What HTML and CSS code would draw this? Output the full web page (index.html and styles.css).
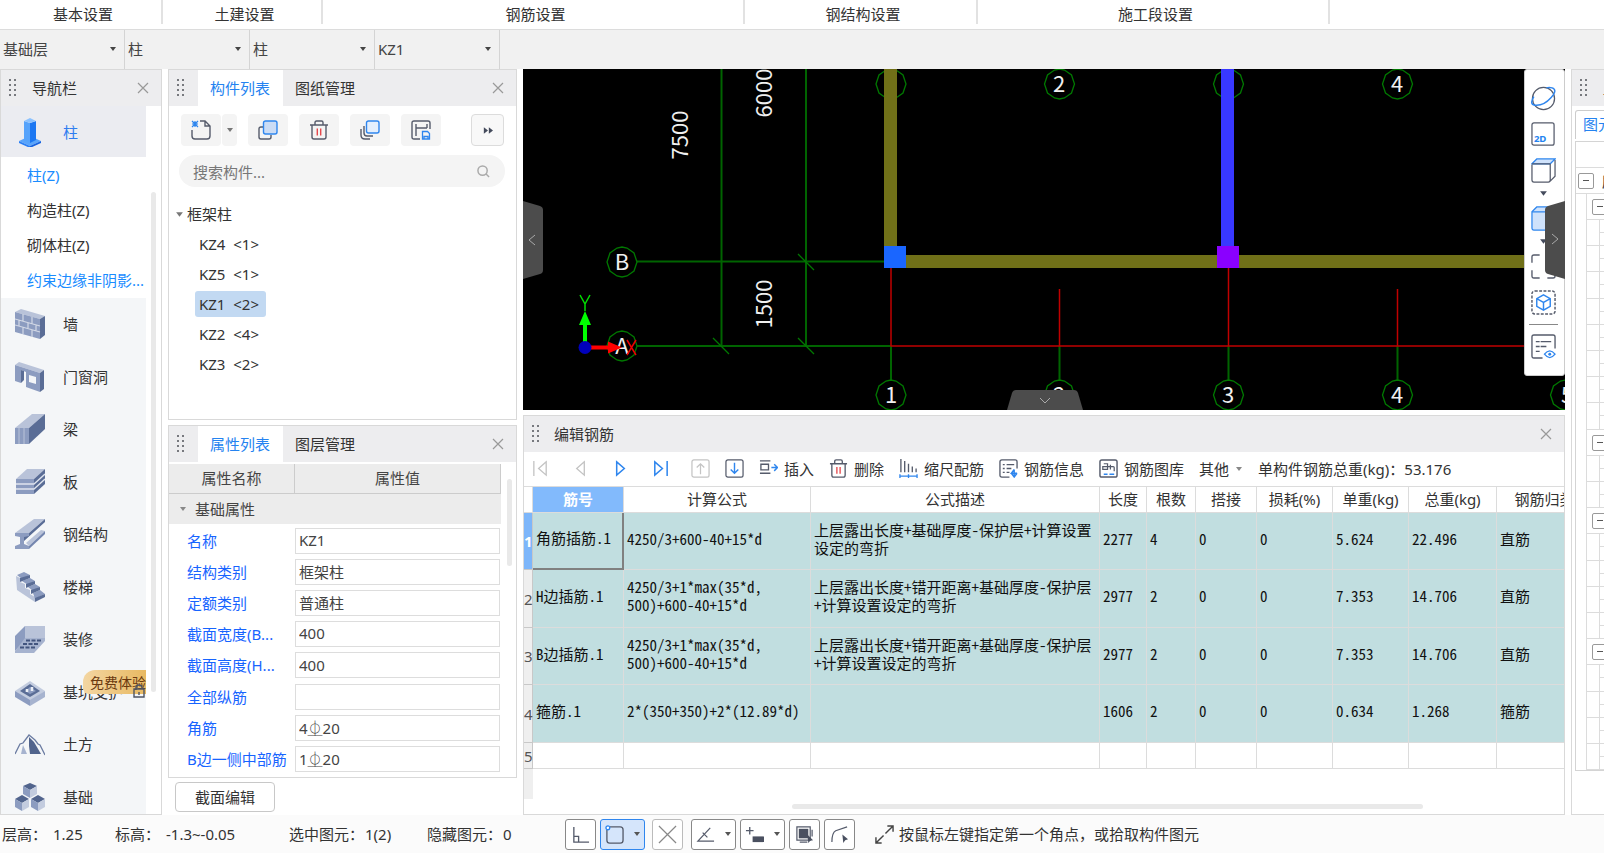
FILE: index.html
```html
<!DOCTYPE html>
<html lang="zh-CN">
<head>
<meta charset="utf-8">
<title>编辑钢筋</title>
<link rel="stylesheet" href="styles.css">
</head>
<body>
<svg class="defs" aria-hidden="true">
  <symbol id="grip" viewBox="0 0 8 18"><path d="M0 0h2v2H0zM5 0h2v2H5zM0 5h2v2H0zM5 5h2v2H5zM0 10h2v2H0zM5 10h2v2H5zM0 15h2v2H0zM5 15h2v2H5z" fill="#77797e"/></symbol>
  <symbol id="close" viewBox="0 0 12 12"><path d="M1 1l10 10M11 1L1 11" stroke="#999" stroke-width="1.2" fill="none"/></symbol>
  <symbol id="down" viewBox="0 0 8 6"><path d="M1 1h6L4 5z" fill="currentColor"/></symbol>
  <symbol id="trash" viewBox="0 0 20 20"><path d="M1 5h18M6 5V2.5Q6 1 7.500 1h5Q14 1 14 2.500V5M3 5v12q0 2 2 2h10q2 0 2-2V5" fill="none" stroke="#555b6b" stroke-width="1.4"/><path d="M8.300 8.500v7M11.700 8.500v7" stroke="#e5484d" stroke-width="1.4"/></symbol>
</svg>

<header class="ribbon">
  <div class="ribbon-group g1">基本设置</div>
  <div class="ribbon-group g2">土建设置</div>
  <div class="ribbon-group g3">钢筋设置</div>
  <div class="ribbon-group g4">钢结构设置</div>
  <div class="ribbon-group g5">施工段设置</div>
</header>

<div class="selectors">
  <label class="picker"><select aria-label="楼层"><option>基础层</option></select><svg><use href="#down"/></svg></label>
  <label class="picker"><select aria-label="构件大类"><option>柱</option></select><svg><use href="#down"/></svg></label>
  <label class="picker"><select aria-label="构件类型"><option>柱</option></select><svg><use href="#down"/></svg></label>
  <label class="picker"><select aria-label="构件"><option>KZ1</option></select><svg><use href="#down"/></svg></label>
</div>

<main class="workspace">
  <nav class="panel nav">
    <div class="panel-head">
      <svg class="grip"><use href="#grip"/></svg><span class="nav-title">导航栏</span>
      <button class="close" aria-label="关闭导航栏"><svg><use href="#close"/></svg></button>
    </div>
    <div class="nav-body">
      <div class="nav-list">
        <button class="nav-item current">
          <svg viewBox="0 0 30 30"><path d="M4 24l11-5 11 5-11 5z" fill="#5aa5fb"/><path d="M4 24l11 5v2L4 26z" fill="#2a7ff5"/><path d="M26 24l-11 5v2l11-5z" fill="#1763e0"/><path d="M9 4l6 2v20l-6-3z" fill="#56a3fb"/><path d="M15 6l6-2v19l-6 3z" fill="#1c77f2"/><path d="M9 4l6-3 6 3-6 2z" fill="#8cc2ff"/></svg>
          <span>柱</span></button>
        <div class="nav-sub">
          <a href="#z" class="hot">柱(Z)</a>
          <a href="#gz">构造柱(Z)</a>
          <a href="#qt">砌体柱(Z)</a>
          <a href="#ys" class="hot">约束边缘非阴影...</a>
        </div>
        <div class="nav-rest">
          <button class="nav-item"><svg viewBox="0 0 30 30"><path d="M0 3l6-3 24 7-5 3z" fill="#b9c3d9"/><path d="M25 10l5-3v19l-5 4z" fill="#5a6d96"/><path d="M0 3l25 7v20L0 23z" fill="#8c9cc0"/><path d="M0 10l25 7M0 16l25 7M8 5v7M17 8v7M4 11v6M13 14v6M21 16v6M8 18v7M17 21v7" stroke="#d3d9e6" stroke-width="1.2"/></svg><span>墙</span></button>
          <button class="nav-item"><svg viewBox="0 0 30 30"><path d="M0 3l4-3 25 8-4 3z" fill="#b9c3d9"/><path d="M25 11l4-3v19l-4 3z" fill="#5a6d96"/><path fill-rule="evenodd" d="M0 3l25 8v19L11 25V10L6 8v13l-6-2zM14 13v7l7 2v-7z" fill="#8c9cc0"/><path d="M6 8l3 1v9l-3 3z" fill="#5a6d96"/></svg><span>门窗洞</span></button>
          <button class="nav-item"><svg viewBox="0 0 30 30"><path d="M0 14L17 0h13L14 14z" fill="#b9c3d9"/><path d="M14 14L30 0v15L14 30z" fill="#5a6d96"/><path d="M0 14h14v16H0z" fill="#8c9cc0"/><path d="M4 14v16M9 14v16" stroke="#b9c3d9"/></svg><span>梁</span></button>
          <button class="nav-item"><svg viewBox="0 0 30 30"><path d="M1 12L12 2h18L19 12z" fill="#b9c3d9"/><path d="M19 12L30 2v15L19 27z" fill="#5a6d96"/><path d="M1 12h18v15H1z" fill="#8c9cc0"/><path d="M1 17h18L30 7M1 22h18l11-10" stroke="#dfe4ee" stroke-width="1.3" fill="none"/></svg><span>板</span></button>
          <button class="nav-item"><svg viewBox="0 0 30 30"><path d="M0 14L19 0h11L14 14z" fill="#b9c3d9"/><path d="M14 14L30 0v3L9 22v-6z" fill="#5a6d96"/><path d="M11 24l15-13 4 1-16 15z" fill="#b9c3d9"/><path d="M14 27l16-15v3L14 30z" fill="#7486af"/><path d="M0 14h14v3l-5 1v7l5 2v3H0v-3l5-2v-7l-5-1z" fill="#8c9cc0"/></svg><span>钢结构</span></button>
          <button class="nav-item"><svg viewBox="0 0 30 30"><path d="M1 4l4 2v4l5 2v4l5 2v4l5 3v5L2 18z" fill="#b9c3d9"/><path d="M2 3l7-3 6 3-8 4zM7 9l8-3 5 3-7 4zM13 15l7-3 5 3-7 4zM18 21l7-3 5 4-10 5z" fill="#8c9cc0"/><path d="M5 6l10-3v3L5 10zM11 12l9-3v3l-9 4zM16 18l9-3v3l-9 4zM20 26l10-4v3l-10 5z" fill="#5a6d96"/></svg><span>楼梯</span></button>
          <button class="nav-item"><svg viewBox="0 0 30 30"><path d="M10 2h20v15H10z" fill="#b9c3d9"/><path d="M10 2v15L0 27V12z" fill="#8c9cc0"/><path d="M10 14h20v3L19 29H0v-2z" fill="#a6b3cf"/><path d="M11 16.500h16M8 20h16M5 23.500h16" stroke="#42557f" stroke-width="1.800" stroke-dasharray="4 1.500"/></svg><span>装修</span></button>
          <button class="nav-item"><svg viewBox="0 0 30 30"><path d="M0 14L15 4l15 10-15 11z" fill="#c3ccdf"/><path d="M0 14l15 9v6L0 20z" fill="#8c9cc0"/><path d="M30 14l-15 9v6l15-9z" fill="#a6b3cf"/><path d="M5 14l10-7 10 7-10 6z" fill="#5a6d96"/><path d="M10 14l5-4 6 4-6 3z" fill="#8c9cc0"/><path d="M12 12v3M17 10v4" stroke="#e9edf5" stroke-width="2.500"/></svg><span>基坑支护</span><em class="badge">免费体验</em><svg class="lock" viewBox="0 0 12 14"><path d="M3 5V3.500Q3 1 6 1t3 2.500V5M1 5h10v8H1zM6 8v3" fill="none" stroke="#4e5464" stroke-width="1.4"/></svg></button>
          <button class="nav-item"><svg viewBox="0 0 30 30"><path d="M0 25L5 15l3-1 6-8 6 5 3 4 2 1 5 10" fill="none" stroke="#6b7ca2" stroke-width="1.300"/><path d="M14 8l5 5 7 12H15l-1-8z" fill="#51648d"/><path d="M8 16l4 9H6z" fill="#a6b3cf"/></svg><span>土方</span></button>
          <button class="nav-item"><svg viewBox="0 0 30 30"><path d="M8 4l7-3 7 3-7 4z" fill="#51648d"/><path d="M8 4l7 4v8l-7-4z" fill="#8c9cc0"/><path d="M22 4l-7 4v8l7-4z" fill="#c3ccdf"/><path d="M0 17l7-4 7 4-7 4z" fill="#51648d"/><path d="M0 17l7 4v8l-7-4z" fill="#8c9cc0"/><path d="M14 17l-7 4v8l7-4z" fill="#c3ccdf"/><path d="M16 17l7-4 7 4-7 4z" fill="#51648d"/><path d="M16 17l7 4v8l-7-4z" fill="#8c9cc0"/><path d="M30 17l-7 4v8l7-4z" fill="#c3ccdf"/></svg><span>基础</span></button>
        </div>
      </div>
      <div class="scroll nav-scroll"></div>
    </div>
  </nav>

  <div class="side">
    <section class="panel components">
      <div class="panel-head">
        <svg class="grip"><use href="#grip"/></svg>
        <button class="tab active">构件列表</button><button class="tab">图纸管理</button>
        <button class="close" aria-label="关闭构件列表"><svg><use href="#close"/></svg></button>
      </div>
      <div class="tools">
        <div class="split">
          <button class="tool" aria-label="新建"><svg viewBox="0 0 20 20"><path d="M1 10v6q0 3 3 3h12q3 0 3-3V6l-5-5H9M14 1v5h5" fill="none" stroke="#555b6b" stroke-width="1.4"/><path d="M1 1l6 6M7 1L1 7M4 1v6M1 4h6" stroke="#2f86ee" stroke-width="1.2"/></svg></button>
          <button class="tool more" aria-label="新建选项"><svg><use href="#down"/></svg></button>
        </div>
        <button class="tool" aria-label="复制"><svg viewBox="0 0 20 20"><path d="M5 7H3Q1 7 1 9v8q0 2 2 2h8q2 0 2-2v-2" fill="none" stroke="#555b6b" stroke-width="1.4"/><rect x="5.500" y="1" width="13.500" height="13" rx="2" fill="#cbdcf5" stroke="#2f86ee" stroke-width="1.4"/></svg></button>
        <button class="tool" aria-label="删除"><svg><use href="#trash"/></svg></button>
        <button class="tool" aria-label="层间复制"><svg viewBox="0 0 20 20"><path d="M1 9v6q0 4 4 4h5M4 6v7q0 3 3 3h6" fill="none" stroke="#555b6b" stroke-width="1.4"/><rect x="6.500" y="1" width="12.500" height="12" rx="2" fill="#e4effd" stroke="#2f86ee" stroke-width="1.4"/></svg></button>
        <button class="tool" aria-label="存档"><svg viewBox="0 0 20 20"><path d="M9 19H3q-2 0-2-2V3q0-2 2-2h14q2 0 2 2v6M5 4v12M5 8h11M16 4v4" fill="none" stroke="#555b6b" stroke-width="1.4"/><path d="M11.500 11.500h5l2 2V19h-7zM13 19v-2.500h4V19" fill="none" stroke="#2f86ee" stroke-width="1.3"/></svg></button>
        <button class="tool expand" aria-label="更多"><svg viewBox="0 0 12 10"><path d="M1 1l5 4-5 4zM7 1l5 4-5 4z" fill="#444b5c"/></svg></button>
      </div>
      <label class="search"><input type="text" placeholder="搜索构件..." aria-label="搜索构件"><svg viewBox="0 0 14 14"><circle cx="6" cy="6" r="5" fill="none" stroke="#aaa" stroke-width="1.600"/><path d="M9.500 9.500L13 13" stroke="#aaa" stroke-width="1.600"/></svg></label>
      <div class="tree">
        <div class="tree-root"><svg><use href="#down"/></svg>框架柱</div>
        <ul>
          <li><span>KZ4 &nbsp;&lt;1&gt;</span></li>
          <li><span>KZ5 &nbsp;&lt;1&gt;</span></li>
          <li><span class="picked">KZ1 &nbsp;&lt;2&gt;</span></li>
          <li><span>KZ2 &nbsp;&lt;4&gt;</span></li>
          <li><span>KZ3 &nbsp;&lt;2&gt;</span></li>
        </ul>
      </div>
    </section>

    <section class="panel props">
      <div class="panel-head">
        <svg class="grip"><use href="#grip"/></svg>
        <button class="tab active">属性列表</button><button class="tab">图层管理</button>
        <button class="close" aria-label="关闭属性列表"><svg><use href="#close"/></svg></button>
      </div>
      <div class="props-body">
        <div class="props-list">
          <div class="props-cols"><div>属性名称</div><div>属性值</div></div>
          <div class="props-group"><svg><use href="#down"/></svg>基础属性</div>
          <div class="fields">
            <label for="f1">名称</label><input id="f1" value="KZ1">
            <label for="f2">结构类别</label><input id="f2" value="框架柱">
            <label for="f3">定额类别</label><input id="f3" value="普通柱">
            <label for="f4">截面宽度(B...</label><input id="f4" value="400">
            <label for="f5">截面高度(H...</label><input id="f5" value="400">
            <label for="f6">全部纵筋</label><input id="f6" value="">
            <label for="f7">角筋</label><input id="f7" value="4⏂20">
            <label for="f8">B边一侧中部筋</label><input id="f8" value="1⏂20">
          </div>
        </div>
        <div class="scroll props-scroll"></div>
      </div>
    </section>
    <button class="section-edit">截面编辑</button>
  </div>

  <div class="center">
    <div class="viewport">
      <svg class="drawing" role="img" aria-label="轴网平面图">
        <g fill="none" stroke="#007800" stroke-width="1.300">
          <path stroke="#006400" stroke-width="2" d="M198.500 0v277M283 0v277M114 192.500h248M114 277h254M368 277v34M536.500 277v34M705.500 277v34M874.500 277v34"/>
          <path d="M275 185l16 16M275 269l16 16M190 269l16 16"/>
          <path id="oct" d="M114 193l-3 9-7 5-5 1-5-1-7-5-3-9 3-9 7-5 5-1 5 1 7 5z"/>
          <use href="#oct" y="84"/><use href="#oct" x="269" y="-178"/><use href="#oct" x="437.500" y="-178"/><use href="#oct" x="606.500" y="-178"/><use href="#oct" x="775.500" y="-178"/>
          <use href="#oct" x="269" y="133"/><use href="#oct" x="437.500" y="133"/><use href="#oct" x="606.500" y="133"/><use href="#oct" x="775.500" y="133"/><use href="#oct" x="943.500" y="133"/>
        </g>
        <path d="M368 199v78h760M536.500 220v57M705.500 199v78M874.500 220v57" fill="none" stroke="#c00000" stroke-width="1.500"/>
        <path d="M361 0h13v186h740v13H361z" fill="#707018"/>
        <path d="M698 0h13v180h-13z" fill="#3838ff"/>
        <path d="M361 177h22v22h-22z" fill="#1a66ff"/><path d="M694 177h22v22h-22z" fill="#8a00ff"/>
        <g class="axis-text">
          <text x="99" y="201">B</text><text x="99" y="285">A</text>
          <text x="536" y="23">2</text><text x="874" y="23">4</text>
          <text x="368" y="334">1</text><text x="536" y="334">2</text><text x="705" y="334">3</text><text x="874" y="334">4</text><text x="1044" y="334">5</text>
          <text transform="translate(165 66) rotate(-90)">7500</text>
          <text transform="translate(249 24) rotate(-90)">6000</text>
          <text transform="translate(249 235) rotate(-90)">1500</text>
        </g>
        <path d="M60 277v-21h-4l6-14 6 14h-4v21z" fill="#0f0"/><path d="M57 226l5 9 5-9M62 235v7" stroke="#0d0" stroke-width="1.500" fill="none"/>
        <path d="M66 276.500h19v-4l14 6-14 6v-4H66z" fill="#f00"/><path d="M104 271l9 15M113 271l-9 15" stroke="#e00" stroke-width="1.500"/>
        <circle cx="62" cy="278.500" r="6.500" fill="#00b"/>
      </svg>
      <div class="view-tools">
        <button aria-label="动态观察"><svg viewBox="0 0 26 26"><circle cx="13" cy="13" r="11.500" fill="none" stroke="#555b6b" stroke-width="1.300"/><path d="M3 11Q-2 19 4 20 13 21 21 12 28 4 22 2q-3-1-6 0" fill="none" stroke="#2f86ee" stroke-width="1.500"/></svg></button>
        <button aria-label="二维"><svg viewBox="0 0 26 26"><rect x="1" y="1" width="23" height="23" rx="2" fill="#fff" stroke="#555b6b" stroke-width="1.300"/><text x="3" y="21">2D</text></svg></button>
        <button aria-label="俯视"><svg viewBox="0 0 26 26"><path d="M1 6l5-5h19l-5 5z" fill="#cfe2fb" stroke="#2f86ee" stroke-width="1.300"/><path d="M1 7v16q0 2 2 2h15q2 0 2-2V6M25 2v17l-5 5M1 6h19" fill="none" stroke="#555b6b" stroke-width="1.300"/></svg></button>
        <svg class="tri"><use href="#down"/></svg>
        <button aria-label="着色"><svg viewBox="0 0 26 26"><path d="M1 6l5-5h19v18l-5 6H3q-2 0-2-2z" fill="#cfe2fb" stroke="#2f86ee" stroke-width="1.300"/><path d="M1 6h19v18" fill="none" stroke="#2f86ee" stroke-width="1.300"/></svg></button>
        <svg class="tri"><use href="#down"/></svg>
        <button aria-label="全屏"><svg viewBox="0 0 26 26"><path d="M9 1H3Q1 1 1 3v6M17 1h6q2 0 2 2v6M9 25H3q-2 0-2-2v-6M17 25h6q2 0 2-2v-6" fill="none" stroke="#555b6b" stroke-width="1.400"/></svg></button>
        <button aria-label="局部三维"><svg viewBox="0 0 26 26"><rect x="1" y="1" width="24" height="24" rx="3" fill="none" stroke="#555b6b" stroke-width="1.500" stroke-dasharray="3 1.500"/><path d="M13 5l7 4v8l-7 4-7-4V9zM6 9l7 4 7-4M13 13v8" fill="none" stroke="#2f86ee" stroke-width="1.500"/></svg></button>
        <hr>
        <button aria-label="显示设置"><svg viewBox="0 0 26 26"><path d="M12 25H3q-2 0-2-2V3q0-2 2-2h20q2 0 2 2v12M5 8h4M10 8h11M5 13h4M10 13h6M5 18h4" fill="none" stroke="#555b6b" stroke-width="1.400"/><path d="M14 21q5.500-7 11 0-5.500 7-11 0z" fill="#fff" stroke="#2f86ee" stroke-width="1.400"/><circle cx="19.500" cy="21" r="1.500" fill="#2f86ee"/></svg></button>
      </div>
      <button class="handle left" aria-label="收起左侧"><svg viewBox="0 0 20 78"><path d="M0 0l17 5q3 1 3 4v60q0 3-3 4L0 78z" fill="#4c4c4c"/><path d="M12 34l-6 5 6 5" fill="none" stroke="#aaa"/></svg></button>
      <button class="handle right" aria-label="收起右侧"><svg viewBox="0 0 20 78"><path d="M20 0L3 5Q0 6 0 9v60q0 3 3 4l17 5z" fill="#4c4c4c"/><path d="M7 33l6 5-6 5" fill="none" stroke="#aaa"/></svg></button>
      <button class="handle bottom" aria-label="收起底部"><svg viewBox="0 0 76 20"><path d="M0 20L5 3q1-3 4-3h58q3 0 4 3l5 17z" fill="#4c4c4c"/><path d="M33 8l5 5 5-5" fill="none" stroke="#aaa"/></svg></button>
    </div>

    <section class="panel rebar">
      <div class="panel-head">
        <svg class="grip"><use href="#grip"/></svg><span class="rebar-title">编辑钢筋</span>
        <button class="close" aria-label="关闭编辑钢筋"><svg><use href="#close"/></svg></button>
      </div>
      <div class="rebar-tools">
        <div class="steps">
          <button aria-label="首行" disabled><svg viewBox="0 0 20 20"><path d="M3 2v16M16 3L8 10l8 7z" fill="none" stroke="#c4c4c4" stroke-width="1.400"/></svg></button>
          <button aria-label="上一行" disabled><svg viewBox="0 0 20 20"><path d="M14 3l-8 7 8 7z" fill="none" stroke="#c4c4c4" stroke-width="1.400"/></svg></button>
          <button aria-label="下一行"><svg viewBox="0 0 20 20"><path d="M6 3l8 7-8 7z" fill="none" stroke="#2f86ee" stroke-width="1.600"/></svg></button>
          <button aria-label="末行"><svg viewBox="0 0 20 20"><path d="M4 3l8 7-8 7zM17 2v16" fill="none" stroke="#2f86ee" stroke-width="1.600"/></svg></button>
          <button aria-label="上移" disabled><svg viewBox="0 0 20 20"><rect x="1" y="1" width="18" height="18" rx="2" fill="none" stroke="#c4c4c4" stroke-width="1.300"/><path d="M10 16V5M6 9l4-4 4 4" fill="none" stroke="#c4c4c4" stroke-width="1.300"/></svg></button>
        </div>
        <button aria-label="下移"><svg viewBox="0 0 20 20"><rect x="1" y="1" width="18" height="18" rx="2" fill="none" stroke="#555b6b" stroke-width="1.300"/><path d="M10 4v11M6 11l4 4 4-4" fill="none" stroke="#2f86ee" stroke-width="1.500"/></svg></button>
        <button><svg viewBox="0 0 20 20"><path d="M1 2h11M1 15h11M2 5.500h8v6H2z" fill="none" stroke="#555b6b" stroke-width="1.400"/><path d="M13 9h6M16 5.500L19.500 9 16 12.500" fill="none" stroke="#2f86ee" stroke-width="1.500"/></svg>插入</button>
        <button><svg><use href="#trash"/></svg>删除</button>
        <button><svg viewBox="0 0 20 20"><path d="M2 0v14M6 2v12M10 5v9M14 8v6M18 10v4" fill="none" stroke="#555b6b" stroke-width="1.400"/><path d="M1 18h18M1 16v4M10 16v4M19 16v4" fill="none" stroke="#2f86ee" stroke-width="1.400"/></svg>缩尺配筋</button>
        <button><svg viewBox="0 0 20 20"><path d="M11 19H3q-2 0-2-2V3q0-2 2-2h14q2 0 2 2v7M4 6h2M8 6h8M4 10h2M8 10h5M4 14h2M8 14h3" fill="none" stroke="#555b6b" stroke-width="1.400"/><path d="M16 11v8M16 11l-3 4h6M13 15l3 4 3-4" fill="none" stroke="#2f86ee" stroke-width="1.500"/></svg>钢筋信息</button>
        <button><svg viewBox="0 0 20 20"><rect x="1" y="1" width="18" height="18" rx="2" fill="none" stroke="#555b6b" stroke-width="1.500"/><path d="M5 5h4v6H4V8h5M12 11V6M9 8h6q1 0 1 1v4" fill="none" stroke="#555b6b" stroke-width="1.300"/><path d="M5 16h4M11 16h5" stroke="#2f86ee" stroke-width="1.500"/></svg>钢筋图库</button>
        <button class="other">其他<svg class="tri"><use href="#down"/></svg></button>
        <div class="total">单构件钢筋总重(kg)：<span>53.176</span></div>
      </div>
      <div class="grid-wrap">
        <table>
          <colgroup><col class="c0"><col class="c1"><col class="c2"><col class="c3"><col class="c4"><col class="c5"><col class="c6"><col class="c7"><col class="c8"><col class="c9"><col class="c10"></colgroup>
          <thead><tr><td></td><th class="on">筋号</th><th>计算公式</th><th>公式描述</th><th>长度</th><th>根数</th><th>搭接</th><th>损耗(%)</th><th>单重(kg)</th><th>总重(kg)</th><th>钢筋归类</th></tr></thead>
          <tbody>
            <tr class="row"><th class="on">1</th><td class="focus">角筋插筋.1</td><td>4250/3+600-40+15*d</td><td>上层露出长度+基础厚度-保护层+计算设置<br>设定的弯折</td><td>2277</td><td>4</td><td>0</td><td>0</td><td>5.624</td><td>22.496</td><td>直筋</td></tr>
            <tr class="row"><th>2</th><td>H边插筋.1</td><td>4250/3+1*max(35*d,<br>500)+600-40+15*d</td><td>上层露出长度+错开距离+基础厚度-保护层<br>+计算设置设定的弯折</td><td>2977</td><td>2</td><td>0</td><td>0</td><td>7.353</td><td>14.706</td><td>直筋</td></tr>
            <tr class="row"><th>3</th><td>B边插筋.1</td><td>4250/3+1*max(35*d,<br>500)+600-40+15*d</td><td>上层露出长度+错开距离+基础厚度-保护层<br>+计算设置设定的弯折</td><td>2977</td><td>2</td><td>0</td><td>0</td><td>7.353</td><td>14.706</td><td>直筋</td></tr>
            <tr class="row"><th>4</th><td>箍筋.1</td><td>2*(350+350)+2*(12.89*d)</td><td></td><td>1606</td><td>2</td><td>0</td><td>0</td><td>0.634</td><td>1.268</td><td>箍筋</td></tr>
            <tr class="blank"><th>5</th><td></td><td></td><td></td><td></td><td></td><td></td><td></td><td></td><td></td><td></td></tr>
          </tbody>
        </table>
        <div class="gutter"></div>
      </div>
      <div class="scroll grid-scroll"></div>
    </section>
  </div>

  <aside class="panel shown">
    <div class="panel-head"><svg class="grip"><use href="#grip"/></svg><span class="shown-title">显示设置</span></div>
    <div class="shown-tabs"><button>图元显示</button></div>
    <div class="shown-grid">
      <div class="shown-head"></div>
      <div class="shown-rows">
        <div class="r top"><button class="fold" aria-label="折叠所有构件"></button><span>所有构件</span></div>
        <div class="r mid"><button class="fold" aria-label="折叠"></button></div>
        <div class="r leaf"></div><div class="r leaf"></div><div class="r leaf"></div><div class="r leaf"></div><div class="r leaf"></div><div class="r leaf"></div><div class="r leaf"></div><div class="r leaf"></div>
        <div class="r mid"><button class="fold" aria-label="折叠"></button></div>
        <div class="r leaf"></div><div class="r leaf"></div>
        <div class="r mid"><button class="fold" aria-label="折叠"></button></div>
        <div class="r leaf"></div><div class="r leaf"></div><div class="r leaf"></div><div class="r leaf"></div>
        <div class="r mid"><button class="fold" aria-label="折叠"></button></div>
        <div class="r leaf"></div><div class="r leaf"></div><div class="r leaf"></div><div class="r leaf"></div>
      </div>
    </div>
  </aside>
</main>

<footer class="status">
  <div class="s1">层高：<span>1.25</span></div>
  <div class="s2">标高：<span>-1.3~-0.05</span></div>
  <div class="s3">选中图元：<span>1(2)</span></div>
  <div class="s4">隐藏图元：<span>0</span></div>
  <div class="modes">
    <button aria-label="正交"><svg viewBox="0 0 20 20"><path d="M3 2v16h16M3 12h5v6" fill="none" stroke="#555b6b" stroke-width="1.400"/></svg></button>
    <button class="wide on" aria-label="捕捉"><svg viewBox="0 0 20 20"><path d="M5 2h11q3 0 3 3v11q0 3-3 3H5q-3 0-3-3V5" fill="none" stroke="#555b6b" stroke-width="1.400"/><circle cx="3" cy="3" r="2" fill="#fff" stroke="#2f86ee" stroke-width="1.400"/></svg><svg class="tri"><use href="#down"/></svg></button>
    <button class="faint" aria-label="交点"><svg viewBox="0 0 20 20"><path d="M1 1l18 18M19 1L1 19" stroke="#888" stroke-width="1.300"/></svg></button>
    <button class="wide" aria-label="角度"><svg viewBox="0 0 20 20"><path d="M15 3L2 17h17M7 8l5 5" fill="none" stroke="#555b6b" stroke-width="1.300"/></svg><svg class="tri"><use href="#down"/></svg></button>
    <button class="wide" aria-label="偏移"><svg viewBox="0 0 20 20"><path d="M1 6h8M5 2v8" stroke="#555b6b" stroke-width="1.400"/><path d="M8 12h12v6H8z" fill="#4a5060"/></svg><svg class="tri"><use href="#down"/></svg></button>
    <button aria-label="选择"><svg viewBox="0 0 20 20"><path d="M2 2h14v14H2zM5 18h8M18 5v7" fill="none" stroke="#555b6b" stroke-width="1.300"/><path d="M4 4h10v10H4z" fill="#4a5060"/><path d="M13 10l6 6-3 .5-2 2.500z" fill="#4a5060"/></svg></button>
    <button aria-label="折线"><svg viewBox="0 0 20 20"><path d="M2 18Q2 8 6 6l12-4" fill="none" stroke="#555b6b" stroke-width="1.300"/><path d="M13 10l6 5-3 1-2 3z" fill="#4a5060"/></svg></button>
  </div>
  <div class="hint"><svg viewBox="0 0 20 20"><path d="M11 9l8-8M13 1h6v6M9 11l-8 8M1 13v6h6" fill="none" stroke="#444" stroke-width="1.500"/></svg>按鼠标左键指定第一个角点，或拾取构件图元</div>
</footer>
</body>
</html>
```
FILE: styles.css
```css
* { box-sizing: border-box; }
body {
  margin: 0;
  height: 100vh;
  display: flex;
  flex-direction: column;
  overflow: hidden;
  background: #fff;
  color: #333;
  font: 15px/20px "Noto Sans", "Noto Sans CJK SC", sans-serif;
}
button, input, select { font: inherit; color: inherit; margin: 0; }
button { background: none; border: 0; padding: 0; display: flex; align-items: center; justify-content: center; white-space: nowrap; }
svg { display: block; flex: none; }
.defs { position: absolute; width: 0; height: 0; }

/* Ribbon captions and pickers */
.ribbon { display: flex; flex: none; height: 29px; }
.ribbon-group { height: 24px; padding: 4px 0 0 5px; text-align: center; border-right: 2px solid #e2e2e2; }
.g1 { width: 163px; }
.g2 { width: 160px; }
.g3 { width: 422px; }
.g4 { width: 233px; }
.g5 { width: 352px; }
.selectors { display: flex; flex: none; height: 40px; background: #f1f1f1; border-top: 1px solid #dcdcdc; }
.picker { display: flex; align-items: center; width: 125px; padding: 0 7px 2px 3px; border-right: 1px solid #d4d4d4; color: #444; }
.picker select { flex: 1; min-width: 0; appearance: none; border: 0; padding: 0; background: none; }
.picker svg { width: 8px; height: 6px; }

/* Panels */
.workspace { flex: 1; min-height: 0; display: grid; grid-template-columns: 162px 349px minmax(0, 1fr) 33px; column-gap: 6px; }
.panel { border: 1px solid #d9d9d9; background: #fff; min-width: 0; }
.panel-head { display: flex; align-items: center; flex: none; height: 36px; background: #ededef; }
.grip { width: 8px; height: 18px; margin-left: 8px; }
.close { margin-left: auto; margin-right: 12px; }
.close svg { width: 12px; height: 12px; }
.scroll { border-radius: 3px; background: #e9e9e9; }

/* Navigation */
.nav { display: flex; flex-direction: column; overflow: hidden; }
.nav-title { margin-left: 15px; }
.nav-body { flex: 1; min-height: 0; display: flex; gap: 5px; }
.nav-list { width: 145px; overflow: hidden; background: #f4f6f8; }
.nav-item { position: relative; width: 100%; height: 100%; justify-content: flex-start; gap: 18px; padding-left: 14px; }
.nav-item > svg { width: 30px; height: 30px; }
.nav-item.current { height: 51px; background: #ebecf1; color: #2f7df0; }
.nav-sub { background: #fff; padding: 1px 0 0 26px; }
.nav-sub a { display: block; height: 35px; line-height: 35px; color: inherit; text-decoration: none; white-space: nowrap; }
.nav-sub a.hot { color: #1a8cff; }
.nav-rest { display: grid; grid-auto-rows: 52px 53px; }
.badge { position: absolute; right: 0; top: 5px; width: 63px; height: 24px; padding-left: 7px; border-radius: 12px 0 0 6px; background: linear-gradient(90deg, #f3d6a2, #e8b962); color: #6b3a10; font: 14px/24px "Noto Sans CJK SC", sans-serif; text-align: left; }
.nav-item > .lock { position: absolute; right: 1px; top: 19px; width: 12px; height: 14px; }
.nav-scroll { width: 5px; height: 500px; margin-top: 86px; }

/* Component list */
.side { display: flex; flex-direction: column; min-width: 0; }
.components { height: 351px; }
.tab { height: 36px; padding: 0 13px 0 12px; }
.tab.active { margin-left: 13px; background: #fff; color: #2583f0; }
.tools { display: flex; align-items: center; gap: 11px; padding: 8px 12px 0; }
.tool { width: 40px; height: 32px; border-radius: 4px; background: #f4f4f4; }
.tool svg { width: 20px; height: 20px; }
.split { display: flex; gap: 1px; }
.tool.more { width: 15px; color: #777; }
.tool.more svg { width: 8px; height: 6px; }
.tool.expand { width: 33px; margin-left: auto; border: 1px solid #dcdcdc; background: #f8f8f8; }
.tool.expand svg { width: 10px; height: 9px; }
.search { display: flex; align-items: center; height: 32px; margin: 9px 11px 0 10px; padding: 1px 15px 0 14px; border-radius: 16px; background: #f4f4f4; }
.search input { flex: 1; min-width: 0; border: 0; padding: 0; background: none; outline: 0; }
.search input::placeholder { color: #777; opacity: 1; }
.search svg { width: 13px; height: 13px; }
.tree { padding: 12px 0 0 6px; }
.tree-root { display: flex; align-items: center; height: 30px; gap: 3px; }
.tree-root svg { width: 9px; height: 7px; color: #777; }
.tree ul { list-style: none; margin: 0; padding: 0 0 0 20px; }
.tree li { display: flex; align-items: center; height: 30px; }
.tree li span { padding: 3px 7px 3px 4px; border-radius: 3px; }
.tree .picked { background: #c2d9f2; }

/* Properties */
.props { display: flex; flex-direction: column; height: 353px; margin-top: 5px; overflow: hidden; }
.props-body { display: flex; gap: 6px; padding-top: 2px; }
.props-list { width: 332px; color: #444; }
.props-cols { display: grid; grid-template-columns: 126px 1fr; height: 30px; background: #ececec; border-bottom: 1px solid #ccc; text-align: center; line-height: 29px; }
.props-cols div { border-right: 1px solid #ccc; }
.props-group { display: flex; align-items: center; gap: 8px; height: 30px; padding-left: 10px; background: #ececec; }
.props-group svg { width: 8px; height: 6px; color: #888; }
.fields { display: grid; grid-template-columns: 105px 205px; grid-auto-rows: 31px 31px 31px 31px 32px; column-gap: 3px; padding: 1px 0 0 18px; align-items: center; }
.fields label { color: #1764ff; white-space: nowrap; }
.fields input { height: 26px; border: 1px solid #ddd; padding: 0 3px 1px; background: #fff; min-width: 0; }
.props-scroll { width: 5px; height: 87px; margin-top: 15px; }
.section-edit { width: 100px; height: 30px; margin: 4px 0 0 7px; border: 1px solid #c8c8c8; border-radius: 4px; }

/* Drawing area */
.center { display: flex; flex-direction: column; gap: 5px; min-width: 0; }
.viewport { position: relative; flex: none; height: 341px; overflow: hidden; background: #000; }
.drawing { width: 100%; height: 100%; }
.axis-text { fill: #f0f0f0; font: 22px "Noto Sans CJK SC", sans-serif; text-anchor: middle; }
.view-tools { position: absolute; right: 0; top: 0; width: 41px; height: 307px; display: flex; flex-direction: column; align-items: center; padding: 16px 2px 0 0; gap: 11px; background: #fff; border: 1px solid #ccc; border-radius: 3px; }
.view-tools svg { width: 25px; height: 25px; }
.view-tools .tri { width: 9px; height: 7px; margin: -4px 0 -2px; color: #444b5c; }
.view-tools hr { width: 29px; margin: -2px 0; border: 0; border-top: 1px solid #888; }
.view-tools text { fill: #2583f0; font: bold 10px "Noto Sans", sans-serif; }
.handle { position: absolute; }
.handle.left { left: 0; top: 132px; }
.handle.right { right: 0; top: 132px; }
.handle.left svg, .handle.right svg { width: 20px; height: 78px; }
.handle.bottom { left: 484px; bottom: 0; }
.handle.bottom svg { width: 76px; height: 20px; }

/* Rebar editor */
.rebar { flex: 1; min-height: 0; display: flex; flex-direction: column; overflow: hidden; }
.rebar-title { margin-left: 14px; }
.rebar-tools { display: flex; align-items: center; flex: none; height: 34px; padding: 0 0 1px 7px; gap: 15px; }
.rebar-tools button { gap: 6px; }
.rebar-tools svg { width: 19px; height: 19px; }
.rebar-tools .steps { display: flex; gap: 21px; }
.rebar-tools .tri { width: 8px; height: 6px; color: #888; }
.total { white-space: nowrap; }
.grid-wrap { flex: none; height: 313px; overflow: hidden; }
table { width: 1069px; table-layout: fixed; border-collapse: separate; border-spacing: 0; }
.c0 { width: 9px; }
.c1 { width: 91px; }
.c2 { width: 187px; }
.c3 { width: 289px; }
.c4 { width: 47px; }
.c5 { width: 49px; }
.c6 { width: 61px; }
.c7 { width: 76px; }
.c8 { width: 76px; }
.c9 { width: 88px; }
.c10 { width: 96px; }
th, td { padding: 0; border-right: 1px solid #dcdcdc; border-bottom: 1px solid #dcdcdc; font-weight: 400; white-space: nowrap; }
thead tr { height: 27px; }
thead th, thead td { border-top: 1px solid #dcdcdc; padding-bottom: 2px; }
thead .on { background: #82bafc; color: #fff; font-weight: 700; }
tbody th { background: #efefef; border-color: #c8c8c8; color: #555; }
tbody th.on { background: #7db6fa; color: #fff; font-weight: 700; }
.row { height: 57px; }
.row:nth-child(even) { height: 58px; }
.row td { padding: 0 0 5px 3px; background: #c1dee0; color: #111; font: 15px/18px "Noto Sans CJK SC", sans-serif; font-feature-settings: "hwid"; }
.row .focus { border-right: 2px solid #808080; border-bottom: 2px solid #808080; }
.blank { height: 26px; }
.gutter { width: 9px; height: 31px; background: #efefef; }
.grid-scroll { flex: none; width: 631px; height: 5px; margin: 5px 0 0 268px; }

/* Display settings */
.shown { overflow: hidden; border-right: 0; }
.shown-title { margin-left: 15px; white-space: nowrap; }
.shown-tabs { height: 33px; padding: 4px 0 0 3px; }
.shown-tabs button { height: 29px; padding: 0 0 2px 7px; border: 1px solid #ccc; border-bottom: 0; border-radius: 3px 0 0 0; color: #2583f0; }
.shown-grid { margin: 2px 0 0 3px; border: 1px solid #d4d4d4; border-right: 0; }
.shown-head { height: 26px; border-bottom: 1px solid #dcdcdc; }
.shown-rows { display: grid; grid-auto-rows: 26px 26px 26px 26px 27px; }
.r { display: flex; align-items: center; border-bottom: 1px solid #dcdcdc; white-space: nowrap; overflow: hidden; }
.r.top { padding-left: 2px; gap: 8px; }
.r.mid { margin-left: 10px; padding-left: 5px; border-left: 1px solid #dcdcdc; }
.r.leaf { margin-left: 10px; padding-left: 12px; border-left: 1px solid #dcdcdc; align-items: stretch; background: linear-gradient(#dcdcdc, #dcdcdc) 12px 12px / 20px 1px no-repeat; }
.r.leaf::before { content: ""; border-left: 1px solid #dcdcdc; }
.fold { flex: none; width: 16px; height: 16px; border: 1px solid #999; border-radius: 2px; background: #fff; }
.fold::before { content: ""; width: 6px; height: 1px; background: #555; }

/* Status bar */
.status { flex: none; display: flex; align-items: center; height: 38px; padding-left: 2px; background: #fbfbfb; white-space: nowrap; }
.status span { margin-left: 6px; }
.s1 { width: 113px; }
.s2 { width: 174px; }
.s3 { width: 138px; }
.s4 { width: 138px; }
.status .s3 span, .status .s4 span { margin-left: 1px; }
.modes { display: flex; gap: 4px; }
.modes button { width: 31px; height: 31px; gap: 9px; border: 1px solid #888; border-radius: 3px; background: #fff; }
.modes svg { width: 19px; height: 19px; }
.modes .tri { width: 8px; height: 6px; color: #555; }
.modes .wide { width: 45px; }
.modes .on { margin-right: 3px; border-color: #2f86ee; background: #d5e5fb; }
.modes .faint { margin-right: 4px; border-color: #bbb; }
.hint { display: flex; align-items: center; gap: 5px; margin-left: 20px; }
.hint svg { width: 19px; height: 19px; }
```
